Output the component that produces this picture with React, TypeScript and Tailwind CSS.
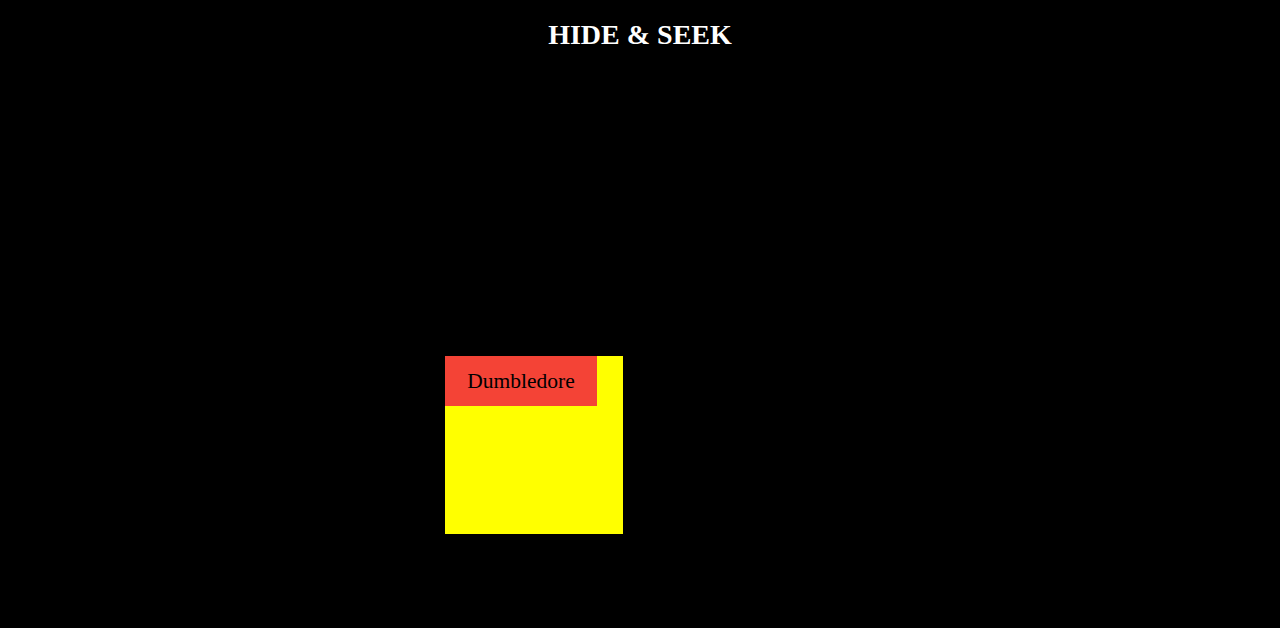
import React from "react";

export default function App() {
  // where the hider is sitting on the board
  const spot = { left: 445, top: 356 };

  return (
    <div className="relative h-screen w-full bg-black overflow-hidden font-['Liberation_Serif',serif]">
      <h1 className="pt-[19px] text-center text-[28px] leading-[32px] font-bold text-white">
        HIDE &amp; SEEK
      </h1>

      <div
        className="absolute w-[178px] h-[178px] bg-[#ffff00]"
        style={{ left: spot.left, top: spot.top }}
      >
        <div className="w-[152px] h-[50px] bg-[#f44336] flex items-center justify-center text-[21.5px] text-black">
          Dumbledore
        </div>
      </div>
    </div>
  );
}
